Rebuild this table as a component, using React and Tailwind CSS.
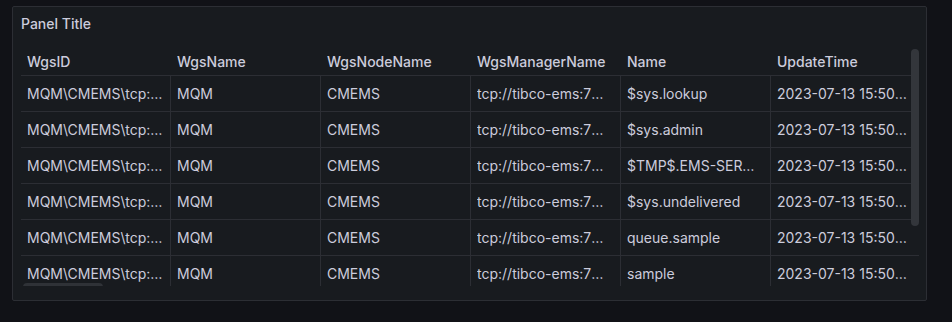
import React from "react";

const cols = ["WgsID", "WgsName", "WgsNodeName", "WgsManagerName", "Name", "UpdateTime"];
const names = ["$sys.lookup", "$sys.admin", "$TMP$.EMS-SERVER.1A2B64B0E0C1", "$sys.undelivered", "queue.sample", "sample"];
const rows = names.map((n, i) => [
  `MQM\\CMEMS\\tcp://tibco-ems:7222\\${n}`,
  "MQM",
  "CMEMS",
  "tcp://tibco-ems:7222",
  n,
  `2023-07-13 15:50:${String(10 + i).padStart(2, "0")}`,
]);

export default function App() {
  return (
    <div
      className="w-[952px] h-[322px] bg-[#111217] pt-[6px] pl-[12px]"
      style={{ fontFamily: "Inter, 'Noto Sans', sans-serif" }}
    >
      <div className="w-[915px] h-[295px] bg-[#181b1f] border border-[#2c2e34] rounded-[2px] flex flex-col">
        <div className="h-8 flex items-center px-2 text-[14px] font-medium text-[#ccccdc]">Panel Title</div>
        <div className="px-2 pt-2">
          <div className="relative w-[898px] h-[239px] overflow-hidden">
            <div className="w-[900px]">
              <div className="flex h-[29px] border-b border-[#2c2e34] items-center">
                {cols.map((c) => (
                  <div key={c} className="w-[150px] shrink-0 px-[6px] text-[14px] font-medium text-[#ccccdc] pt-[1px]">
                    {c}
                  </div>
                ))}
              </div>
              {rows.map((r, i) => (
                <div key={i} className="flex h-[36px] border-b border-[#2c2e34]">
                  {r.map((v, j) => (
                    <div
                      key={j}
                      className={
                        j === 0
                          ? "w-[150px] shrink-0 pl-[6px] pr-[5px] flex items-center text-[14px] text-[#ccccdc] border-r border-[#2c2e34]"
                          : "w-[150px] shrink-0 pl-[6px] pr-[10px] flex items-center text-[14px] text-[#ccccdc] border-r border-[#2c2e34]"
                      }
                    >
                      <span className="block truncate w-full">{v}</span>
                    </div>
                  ))}
                </div>
              ))}
            </div>
            <div className="absolute left-[2px] top-[236px] w-[80px] h-[8px] rounded-full bg-[#2f3237]" />
            <div className="absolute left-[890px] top-[2px] w-[8px] h-[177px] rounded-full bg-[#33363b]" />
          </div>
        </div>
      </div>
    </div>
  );
}
